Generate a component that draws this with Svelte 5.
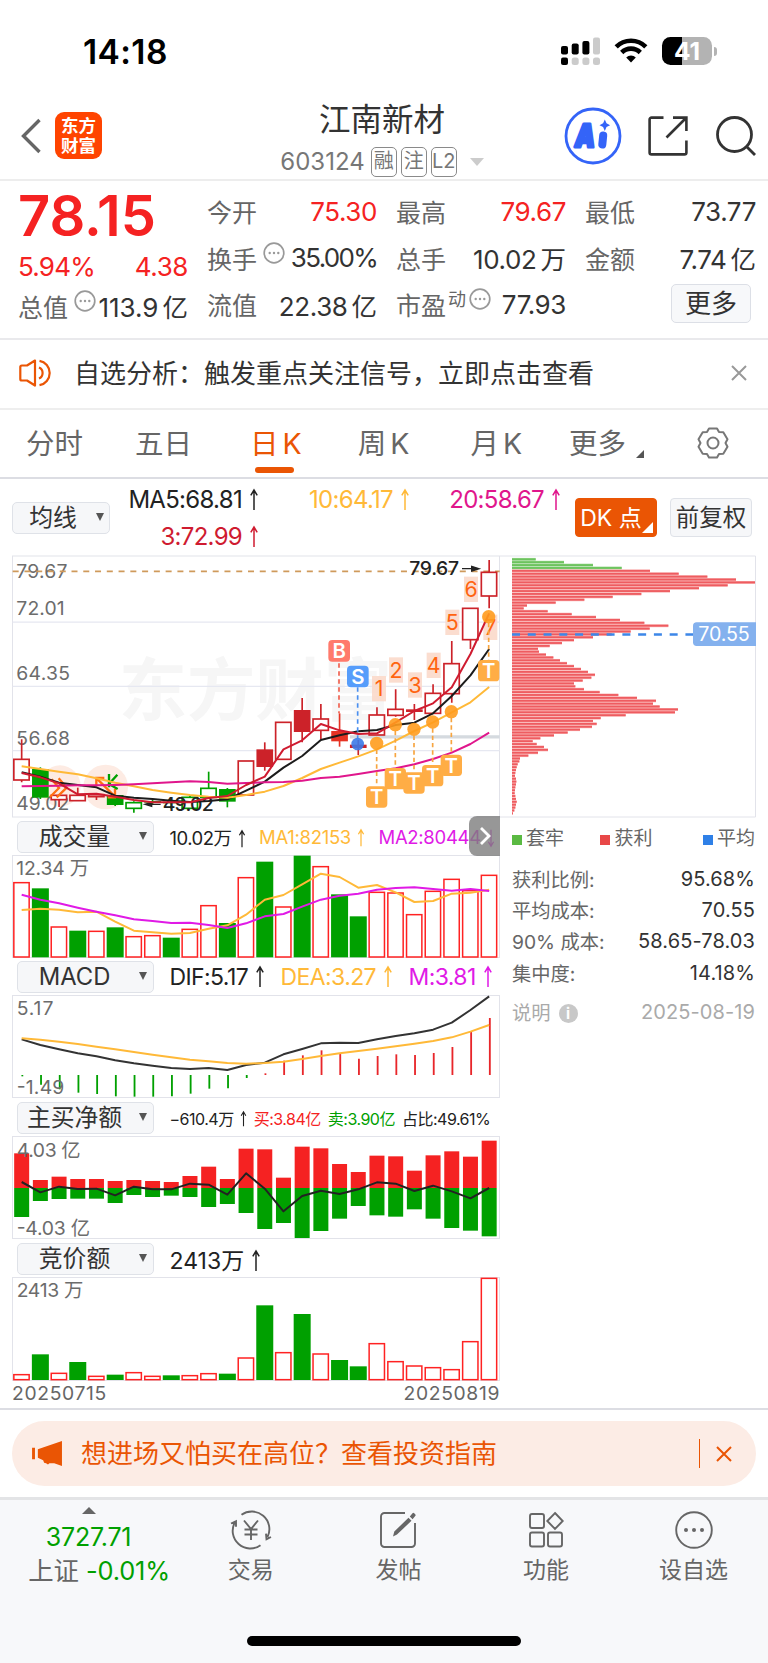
<script>
  // Chart geometry is kept at 3 units per css pixel
  const STEP = 56.1;
  const cx = (i) => 65 + STEP * i;
  const line = (ys) => ys.map((y, i) => `${cx(i).toFixed(1)},${y}`).join(' ');

  const quotes = [
    [
      { label: '今开', value: '75.30', red: true },
      { label: '换手', value: '35.00%', info: true, tight: true },
      { label: '流值', value: '22.38', unit: '亿' }
    ],
    [
      { label: '最高', value: '79.67', red: true },
      { label: '总手', value: '10.02', unit: '万' },
      { label: '市盈', sup: '动', value: '77.93', info: true }
    ],
    [
      { label: '最低', value: '73.77' },
      { label: '金额', value: '7.74', unit: '亿' }
    ]
  ];

  // h = hollow, f = filled; [type, colour, body top, body bottom, wick top, wick bottom]
  const RED = '#cc2229';
  const GREEN = '#00a000';
  const candles = [
    ['h', RED, 628, 690, 568, 697],
    ['f', GREEN, 657, 743, 652, 747],
    ['h', RED, 736, 749, 736, 771],
    ['h', RED, 736, 752, 713, 752],
    ['h', RED, 734, 740, 730, 750],
    ['f', GREEN, 735, 765, 733, 768],
    ['h', GREEN, 758, 775, 754, 788],
    ['f', GREEN, 753, 758, 749, 764],
    ['f', GREEN, 755, 760, 751, 776],
    ['h', GREEN, 742, 775, 738, 775],
    ['h', GREEN, 715, 742, 665, 742],
    ['f', GREEN, 717, 755, 714, 772],
    ['h', RED, 633, 735, 633, 735],
    ['f', RED, 598, 651, 577, 662],
    ['h', RED, 517, 628, 517, 628],
    ['f', RED, 480, 546, 444, 577],
    ['h', RED, 507, 541, 462, 568],
    ['f', '#e63323', 543, 574, 490, 590],
    ['f', RED, 584, 594, 570, 615],
    ['h', RED, 495, 555, 472, 555],
    ['h', RED, 478, 496, 418, 500],
    ['f', RED, 478, 486, 462, 510],
    ['h', RED, 430, 490, 403, 490],
    ['h', RED, 341, 431, 273, 458],
    ['h', RED, 175, 269, 175, 297],
    ['h', RED, 67, 138, 30, 175]
  ];
  const ma3 = [669, 682, 700, 733, 731, 740, 750, 757, 757, 757, 744, 738, 705, 680, 598, 571, 522, 541, 552, 550, 517, 483, 460, 412, 312, 190];
  const ma5 = [667, 680, 698, 705, 712, 737, 743, 747, 752, 756, 753, 748, 722, 695, 653, 618, 570, 556, 544, 540, 525, 518, 490, 438, 376, 297];
  const ma10 = [649, 657, 665, 673, 685, 698, 709, 720, 728, 735, 740, 743, 735, 725, 708, 684, 657, 638, 619, 598, 572, 543, 517, 487, 457, 411];
  const ma20 = [709, 708, 707, 706, 706, 705, 703, 700, 697, 694, 696, 701, 699, 697, 696, 692, 684, 680, 672, 663, 655, 643, 627, 608, 582, 548];

  const priceLabels = [
    ['79.67', 84, 153],
    ['72.01', 195, 145],
    ['64.35', 390, 161],
    ['56.68', 585, 161],
    ['49.02', 779, 159]
  ];
  const counts = [
    [1, 1137, 416],
    [2, 1188, 360],
    [3, 1245, 405],
    [4, 1301, 346],
    [5, 1357, 217],
    [6, 1413, 118],
    [7, 1471, 232]
  ];
  const tMarks = [
    [1130, 580, 741],
    [1186, 524, 686],
    [1242, 538, 699],
    [1298, 516, 677],
    [1354, 485, 646],
    [1466, 200, 362]
  ];

  const volume = [202, 220, 335, 347, 348, 337, 364, 361, 368, 342, 271, 324, 187, 140, 275, 122, 154, 238, 304, 231, 233, 298, 228, 192, 226, 180];
  const volumeDown = [1, 3, 5, 8, 11, 13, 15, 17, 18];
  const volMa1 = [285, 281, 284, 292, 290, 320, 347, 352, 356, 354, 341, 331, 299, 254, 240, 208, 176, 186, 218, 210, 232, 261, 258, 236, 233, 224];
  const volMa2 = [239, 254, 265, 278, 290, 301, 313, 318, 324, 323, 330, 339, 325, 304, 297, 275, 254, 242, 236, 224, 219, 217, 222, 227, 222, 228];

  const dif = [238, 255, 268, 280, 289, 301, 310, 317, 324, 327, 324, 330, 315, 308, 283, 267, 250, 248, 249, 238, 228, 220, 209, 188, 150, 109];
  const dea = [235, 239, 245, 252, 260, 268, 276, 284, 292, 299, 304, 309, 311, 309, 305, 297, 288, 280, 273, 266, 259, 251, 243, 232, 215, 195];
  const macd = [349, 374, 388, 398, 402, 409, 410, 410, 409, 401, 386, 385, 354, 340, 302, 286, 271, 281, 296, 288, 283, 285, 279, 261, 216, 174];

  const buyTop = [160, 240, 230, 237, 237, 243, 240, 243, 246, 228, 200, 237, 146, 148, 233, 140, 145, 192, 216, 167, 169, 212, 166, 154, 170, 122];
  const sellBottom = [351, 303, 297, 296, 296, 309, 285, 291, 287, 291, 321, 312, 339, 387, 369, 414, 393, 356, 318, 346, 350, 328, 356, 384, 392, 409];
  const netLine = [246, 277, 260, 267, 266, 286, 260, 268, 268, 251, 254, 284, 220, 266, 334, 288, 272, 282, 268, 247, 251, 273, 257, 274, 295, 264];

  const auction = [403, 343, 399, 366, 408, 404, 397, 408, 406, 406, 400, 401, 353, 196, 337, 222, 341, 360, 379, 310, 364, 377, 382, 388, 304, 114];
  const auctionDown = [1, 3, 5, 8, 11, 13, 15, 17, 18];

  const chips = [
    107, 192, 279, 365, 450, 536, 622, 708, 765, 683, 597, 510, 424, 338, 253, 167, 81, 71, 143, 215, 288, 360, 433, 505, 449,
    392, 335, 279, 222, 186, 149, 114, 117, 138, 160, 180, 201, 222, 243, 264, 285, 274, 248, 222, 226, 252, 299, 355, 411, 468,
    459, 479, 534, 525, 377, 302, 279, 290, 276, 240, 203, 162, 121, 98, 110, 132, 144, 114, 85, 60, 58, 53, 50, 48, 46,
    45, 48, 49, 48, 46, 45, 44, 46, 48, 50, 48, 46, 43, 39
  ];

  const costRows = [
    ['获利比例:', '95.68%'],
    ['平均成本:', '70.55'],
    ['90% 成本:', '58.65-78.03'],
    ['集中度:', '14.18%']
  ];
</script>

{#snippet arrow()}
  <svg class="arrow" viewBox="0 0 8 22"><path d="M4 21V1M.8 6.4 4 1l3.2 5.4" /></svg>
{/snippet}

{#snippet info()}
  <svg class="info" viewBox="0 0 22 22">
    <circle cx="11" cy="11" r="9.8" />
    <g><circle cx="6.7" cy="11" r="1.2" /><circle cx="11" cy="11" r="1.2" /><circle cx="15.3" cy="11" r="1.2" /></g>
  </svg>
{/snippet}

{#snippet bars(tops, down, base)}
  {#each tops as top, i}
    {#if down.includes(i)}
      <rect x={cx(i) - 25.5} y={top} width="51" height={base - top} fill={GREEN} />
    {:else}
      <rect x={cx(i) - 23.5} y={top + 1} width="46" height={Math.max(base - top - 2, 4)} fill="#fff" stroke="#f22" stroke-width="4.5" />
    {/if}
  {/each}
{/snippet}

{#snippet picker(name)}
  <button class="picker">{name}<i></i></button>
{/snippet}

<div class="page">
  <header class="status">
    <span class="time">14:18</span>
    <div class="status-icons">
      <svg class="signal" viewBox="0 0 40 28">
        <g fill="#000">
          <rect x="0" y="9" width="7" height="8.5" rx="2" /><rect x="10.7" y="6.5" width="7" height="11" rx="2" />
          <rect x="21.4" y="4" width="7" height="13.5" rx="2" /><rect x="0" y="20.5" width="7" height="7.5" rx="2" />
        </g>
        <g fill="#cbcbcb">
          <rect x="32" y="0.5" width="7" height="17" rx="2" /><rect x="10.7" y="20.5" width="7" height="7.5" rx="2.5" />
          <rect x="21.4" y="20.5" width="7" height="7.5" rx="2.5" /><rect x="32" y="20.5" width="7" height="7.5" rx="2.5" />
        </g>
      </svg>
      <svg class="wifi" viewBox="0 0 34 25">
        <path d="M2.2 8.8a21 21 0 0 1 29.6 0M7.7 14.5a13.2 13.2 0 0 1 18.6 0" />
        <path class="dot" d="M17 24.6l-4.8-5a6.8 6.8 0 0 1 9.6 0z" />
      </svg>
      <div class="battery"><b>41</b></div>
    </div>
  </header>

  <nav class="title-bar">
    <svg class="back" viewBox="0 0 20 36"><path d="M18.5 2 2.5 18l16 16" /></svg>
    <div class="logo"><span>东方</span><span>财富</span></div>
    <div class="title">
      <h1>江南新材</h1>
      <div class="code">
        <span class="num">603124</span><em>融</em><em>注</em><em>L2</em><i></i>
      </div>
    </div>
    <svg class="ai" viewBox="0 0 58 58">
      <circle cx="29" cy="29" r="27" />
      <text x="11" y="39.5" textLength="20" lengthAdjust="spacingAndGlyphs">A</text>
      <path class="stem" d="M39.2 28.5 38.3 37.5" />
      <path class="star" d="M40.8 12.5l1.7 3.8 3.6 1.9-3.6 1.9-1.7 3.8-1.7-3.8-3.6-1.9 3.6-1.9z" />
    </svg>
    <svg class="share" viewBox="0 0 40 40"><path d="M15.5 1.6H3.6a2 2 0 0 0-2 2v32.8a2 2 0 0 0 2 2h32.8a2 2 0 0 0 2-2V24.5M25 1.6h13.4V15M38 2 18.5 21.5" /></svg>
    <svg class="search" viewBox="0 0 40 40"><circle cx="18.5" cy="18.5" r="17" /><path d="M30.5 30.5l8.5 8.5" /></svg>
  </nav>

  <section class="quote">
    <div class="col main">
      <strong>78.15</strong>
      <div class="cell change red"><span class="pct">5.94%</span><span>4.38</span></div>
      <div class="cell">
        <label>总值</label>{@render info()}<span class="val cap">113.9<small>亿</small></span>
      </div>
    </div>
    {#each quotes as col, c}
      <div class="col">
        {#each col as q}
          <div class="cell">
            <label>{q.label}{#if q.sup}<sup>{q.sup}</sup>{/if}</label>
            {#if q.info}{@render info()}{/if}
            <span class="val" class:red={q.red} class:tight={q.tight}>{q.value}{#if q.unit}<small>{q.unit}</small>{/if}</span>
          </div>
        {/each}
        {#if c === 2}<div class="cell end"><button class="more">更多</button></div>{/if}
      </div>
    {/each}
  </section>

  <section class="notice">
    <svg class="horn" viewBox="0 0 34 28">
      <path d="M16 1.5 8 6.5H2.8a1.5 1.5 0 0 0-1.5 1.5v12a1.5 1.5 0 0 0 1.5 1.5H8l8 5zM20 8.5a6 6 0 0 1 0 11M20.5 1.8a12.4 12.4 0 0 1 0 24.4" />
    </svg>
    <p>自选分析：触发重点关注信号，立即点击查看</p>
    <svg class="close" viewBox="0 0 16 16"><path d="M1 1l14 14M15 1 1 15" /></svg>
  </section>

  <nav class="tabs">
    <span>分时</span><span>五日</span><span class="on">日<b>K</b></span><span>周<b>K</b></span><span>月<b>K</b></span><span class="drop">更多<i></i></span>
    <svg class="gear" viewBox="0 0 32 32">
      <path d="M12 1.5h8l2 3.6 4.3.2 4.2 7-2 3.7 2 3.7-4.2 7-4.3.2-2 3.6h-8l-2-3.6-4.3-.2-4.2-7 2-3.7-2-3.7 4.2-7 4.3-.2z" />
      <circle cx="16" cy="16" r="5.5" />
    </svg>
  </nav>

  <section class="ma-bar">
    <button class="picker small">均线<i></i></button>
    <div class="ma">
      <span class="black">MA5:68.81{@render arrow()}</span>
      <span class="gold">10:64.17{@render arrow()}</span>
      <span class="pink">20:58.67{@render arrow()}</span>
      <span class="crimson">3:72.99{@render arrow()}</span>
    </div>
    <button class="dk">DK 点<i></i></button>
    <button class="adjust">前复权</button>
  </section>

  <div class="charts">
    <div class="left">
      <svg class="chart kline" viewBox="36 15 1464 786">
        <rect class="frame" x="37.5" y="18" width="1461" height="783" />
        <text class="watermark" x="356" y="496" textLength="820">东方财富</text>
        <path class="grid" d="M38 216.5H1499M38 409H1499M38 602H1499" />
        <path d="M1050 560.5H1499" stroke="#d5dadf" stroke-width="10" />
        <circle cx="180" cy="708" r="62" fill="#fdebe3" />
        <circle cx="317" cy="711" r="67" fill="#fdebe3" />
        {#each priceLabels as [text, y, w]}
          <text class="axis" x="49" {y} textLength={w}>{text}</text>
        {/each}
        <path d="M38 64H1499" stroke="#cf9a5b" stroke-width="5.5" stroke-dasharray="18 17.3" />
        {#each candles as [type, color, top, bottom, high, low], i}
          {#if type === 'h'}
            <path d="M{cx(i)} {high}V{top}M{cx(i)} {bottom}V{low}" stroke={color} stroke-width="5" />
            <rect x={cx(i) - 23.5} y={top} width="46" height={bottom - top} fill="#fff" stroke={color} stroke-width="5" />
          {:else}
            <path d="M{cx(i)} {high}V{low}" stroke={color} stroke-width="5" />
            <rect x={cx(i) - 25} y={top} width="50" height={bottom - top} fill={color} />
          {/if}
        {/each}
        {#each counts as [n, x, y]}
          <rect x={x - 21} y={y - 38} width="42" height="76" fill="#fbd9ca" opacity="0.9" />
          <text class="count" {x} y={y + 23}>{n}</text>
        {/each}
        <g class="signal-mark">
          <path d="M155 688l22 26-27 27M176 685l24 28-30 29" />
          <path d="M289 709V684H313M290 685l55 55M345 716v26h-22" />
          <path d="M327 672V712M352 674l-25 28 26 15" stroke="#00a000" />
        </g>
        <text class="extreme" x="488" y="783" textLength="153">49.02</text>
        <path class="pointer" d="M440 763H482M455 757l-20 6 20 6z" />
        <polyline points={line(ma5)} stroke="#1c1c1c" />
        <polyline points={line(ma10)} stroke="#ffb938" />
        <polyline points={line(ma20)} stroke="#e0168c" />
        <polyline points={line(ma3)} stroke="#cf1b30" />
        <path d="M1017 340V490" stroke="#f0604f" stroke-width="5" stroke-dasharray="13 11" />
        <path d="M1073 412V565" stroke="#4a8ff0" stroke-width="5" stroke-dasharray="13 11" />
        <rect x="985" y="270" width="65" height="65" rx="12" fill="#ff7a6c" />
        <text class="mark" x="1017.5" y="324">B</text>
        <rect x="1041" y="347" width="65" height="65" rx="12" fill="#569dfb" />
        <text class="mark" x="1073.5" y="401">S</text>
        <circle cx="1073" cy="582" r="19" fill="#3c7ae8" opacity="0.9" />
        {#each tMarks as [x, dot, box]}
          <path d="M{x} {dot + 19}V{box - 32}" stroke="#f7a540" stroke-width="5" stroke-dasharray="13 9" />
          <circle cx={x} cy={dot} r="20" fill="#ff9c1e" opacity="0.9" />
          <rect x={x - 32} y={box - 32} width="64" height="64" rx="11" fill="#ffad45" />
          <text class="mark" {x} y={box + 22}>T</text>
        {/each}
        <text class="extreme" x="1228" y="76" textLength="149">79.67</text>
        <path class="pointer" d="M1386 56H1430M1415 49l22 7-22 7z" />
      </svg>

      <div class="row vol">
        {@render picker('成交量')}
        <span class="black">10.02万{@render arrow()}</span>
        <span class="gold">MA1:82153{@render arrow()}</span>
        <span class="purple down">MA2:80444{@render arrow()}</span>
        <button class="fold" aria-label="收起"><svg viewBox="0 0 12 20"><path d="M2 2l8 8-8 8" /></svg></button>
      </div>
      <svg class="chart" viewBox="36 120 1464 309">
        <rect class="frame" x="37.5" y="121.5" width="1461" height="306" />
        <text class="axis" x="49" y="181" textLength="218">12.34 万</text>
        {@render bars(volume, volumeDown, 427)}
        <polyline points={line(volMa1)} stroke="#ffb938" />
        <polyline points={line(volMa2)} stroke="#e01ae6" />
      </svg>

      <div class="row macd">
        {@render picker('MACD')}
        <span class="black">DIF:5.17{@render arrow()}</span>
        <span class="gold">DEA:3.27{@render arrow()}</span>
        <span class="purple">M:3.81{@render arrow()}</span>
      </div>
      <svg class="chart" viewBox="36 105 1464 309">
        <rect class="frame" x="37.5" y="106.5" width="1461" height="306" />
        {#each macd as y, i}
          <path d="M{cx(i) + 2} 345V{y}" stroke={y > 345 ? GREEN : '#e8262a'} stroke-width="5.5" />
        {/each}
        <text class="axis" x="50" y="166" textLength="110">5.17</text>
        <text class="axis" x="50" y="401" textLength="143">-1.49</text>
        <polyline points={line(dif)} stroke="#333" />
        <polyline points={line(dea)} stroke="#ffb938" />
      </svg>

      <div class="row net">
        {@render picker('主买净额')}
        <span class="black">−610.4万{@render arrow()}</span>
        <span class="red">买:3.84亿</span>
        <span class="green">卖:3.90亿</span>
        <span class="black">占比:49.61%</span>
      </div>
      <svg class="chart" viewBox="36 108 1464 309">
        <rect class="frame" x="37.5" y="109.5" width="1461" height="306" />
        {#each buyTop as y, i}
          <rect x={cx(i) - 22.5} {y} width="45" height={264 - y} fill="#f52222" />
          <rect x={cx(i) - 22.5} y="264" width="45" height={sellBottom[i] - 264} fill={GREEN} />
        {/each}
        <text class="axis" x="50" y="170" textLength="192">4.03 亿</text>
        <text class="axis" x="50" y="404" textLength="220">-4.03 亿</text>
        <polyline points={line(netLine)} stroke="#222" />
      </svg>

      <div class="row bid">
        {@render picker('竞价额')}
        <span class="black">2413万{@render arrow()}</span>
      </div>
      <svg class="chart bid-chart" viewBox="36 111 1464 312">
        <rect class="frame" x="37.5" y="112.5" width="1461" height="309" />
        <text class="axis" x="50" y="171" textLength="200">2413 万</text>
        {@render bars(auction, auctionDown, 420)}
      </svg>
      <div class="dates"><span>20250715</span><span>20250819</span></div>
    </div>

    <div class="right">
      <svg class="chart chips" viewBox="0 15 768 786">
        <path class="frame" d="M0 18H766.5V801H0" />
        {#each chips as x, i}
          <rect x="36" y={23.7 + i * 8.66} width={x - 36} height="8.66" fill={i < 4 ? '#a5d99b' : '#f9abab'} />
          <rect x="36" y={25.2 + i * 8.66} width={x - 36} height="5.4" fill={i < 4 ? '#6cc35d' : '#ee5c60'} />
        {/each}
        <path d="M36 253.5H580" stroke="#3d87e8" stroke-width="7" stroke-dasharray="24 23.3" />
        <path d="M768 217H590q-11 0-11 11v49q0 11 11 11H768z" fill="#84b1ee" />
        <text class="badge" x="595" y="274" textLength="154">70.55</text>
      </svg>
      <div class="legend">
        <span><i class="g"></i>套牢</span><span><i class="r"></i>获利</span><span><i class="b"></i>平均</span>
      </div>
      {#each costRows as [name, value]}
        <div class="cost"><span>{name}</span><b>{value}</b></div>
      {/each}
      <div class="cost note"><span>说明<i>i</i></span><b>2025-08-19</b></div>
    </div>
  </div>

  <section class="promo">
    <div class="pill">
      <svg class="mega" viewBox="0 0 32 28"><path d="M0 8h3v12H0zM6 9.5 31 1v26l-8-2.8h-1.5L20.5 24l-1.5 0-1 0-1.5 1.5-2-1.5-2-.5-1-2.5L6 18.5z" /></svg>
      <p>想进场又怕买在高位？查看投资指南</p>
      <i></i>
      <svg class="close" viewBox="0 0 16 16"><path d="M1 1l14 14M15 1 1 15" /></svg>
    </div>
  </section>

  <footer>
    <div class="index">
      <i></i>
      <span class="green">3727.71</span>
      <div>上证 <span class="green">-0.01%</span></div>
    </div>
    <div class="item">
      <svg viewBox="0 0 42 38">
        <path d="M11.5 3.8A17.6 17.6 0 0 1 37.5 26M30.5 34.2A17.6 17.6 0 0 1 4.8 11.5M1 12.5l5-2.2v5.5M41 26l-4.5 2.2-.5-5.5M14 9.5l7 8.5 7-8.5M14.5 18.5h13M14.5 23.5h13M21 18v11" />
      </svg>
      交易
    </div>
    <div class="item">
      <svg viewBox="0 0 38 38">
        <path d="M26 2H5.5A3.5 3.5 0 0 0 2 5.5v27A3.5 3.5 0 0 0 5.5 36h27a3.5 3.5 0 0 0 3.5-3.5V12" />
        <path class="solid" d="M14 25.5l1.3-5L29.5 6.8l3 3L18 23.5zM30.8 5.5l2.7-3.2a1.2 1.2 0 0 1 1.7 0l1 1a1.2 1.2 0 0 1 0 1.7L33.6 8.2z" />
      </svg>
      发帖
    </div>
    <div class="item">
      <svg viewBox="0 0 38 38">
        <rect x="3" y="3" width="14" height="14" rx="2" /><rect x="3" y="21.5" width="14" height="14" rx="2" />
        <rect x="21" y="21.5" width="14" height="14" rx="2" /><path d="M28 2l7.7 8-7.7 8-7.7-8z" />
      </svg>
      功能
    </div>
    <div class="item">
      <svg viewBox="0 0 38 38">
        <circle cx="19" cy="19" r="17.8" />
        <g class="solid"><circle cx="11" cy="19" r="2" /><circle cx="19" cy="19" r="2" /><circle cx="27" cy="19" r="2" /></g>
      </svg>
      设自选
    </div>
    <div class="home"></div>
  </footer>
</div>

<style>
  :global(body) {
    margin: 0;
    background: #fff;
  }

  .page {
    width: 768px;
    height: 1663px;
    overflow: hidden;
    display: flex;
    flex-direction: column;
    font-family: Inter, 'Noto Sans CJK SC', sans-serif;
    color: #333;
    background: #fff;
    white-space: nowrap;
  }

  h1,
  p {
    margin: 0;
    font-weight: 400;
  }

  button {
    font: inherit;
    color: #333;
    padding: 0;
    box-sizing: border-box;
  }

  svg {
    display: block;
    flex: none;
    fill: none;
    overflow: visible;
  }

  i {
    font-style: normal;
  }

  .red { color: #f52222; }
  .green { color: #00a000; }
  .black { color: #222; }
  .gold { color: #ffb938; }
  .pink { color: #e0168c; }
  .crimson { color: #cf1b30; }
  .purple { color: #e01ae6; }

  .status {
    height: 90px;
    display: flex;
    justify-content: space-between;
    box-sizing: border-box;
    padding: 0 52px 0 83px;
  }

  .time {
    margin-top: 32px;
    font-size: 33.5px;
    line-height: 40px;
    font-weight: 600;
    color: #000;
    letter-spacing: 0.4px;
  }

  .status-icons {
    display: flex;
    align-items: flex-start;
    margin-top: 37px;
  }

  .signal {
    width: 40px;
    height: 28px;
    margin-right: 13px;
  }

  .wifi {
    width: 34px;
    height: 25px;
    margin: 1px 14px 0 0;
    stroke: #000;
    stroke-width: 4.6;
  }

  .wifi .dot {
    fill: #000;
    stroke: none;
  }

  .battery {
    position: relative;
    width: 50px;
    height: 28px;
    margin-right: 4px;
    border-radius: 8.5px;
    background: linear-gradient(90deg, #000 41%, #b3b3b3 41%);
    text-align: center;
  }

  .battery b {
    font-size: 24.5px;
    line-height: 28px;
    font-weight: 700;
    color: #fff;
  }

  .battery::after {
    content: '';
    position: absolute;
    right: -4.5px;
    top: 10px;
    width: 3px;
    height: 9px;
    border-radius: 0 4px 4px 0;
    background: #b3b3b3;
  }

  .title-bar {
    height: 91px;
    display: flex;
    align-items: flex-start;
    box-sizing: border-box;
    padding: 0 12px 0 21px;
    border-bottom: 2px solid #ededed;
  }

  .back {
    width: 20px;
    height: 36px;
    margin: 28px 14px 0 0;
    stroke: #666;
    stroke-width: 3.4;
  }

  .logo {
    width: 47px;
    height: 47px;
    margin-top: 22px;
    border-radius: 9px;
    background: #ff4400;
    color: #fff;
    display: flex;
    flex-direction: column;
    align-items: center;
    justify-content: center;
    font-size: 17.5px;
    line-height: 19.5px;
    font-weight: 700;
  }

  .title {
    flex: 1;
    display: flex;
    flex-direction: column;
    align-items: center;
    margin-left: 147px;
    margin-right: 49px;
  }

  h1 {
    margin-top: 10px;
    font-size: 31.5px;
    line-height: 40px;
  }

  .code {
    display: flex;
    align-items: center;
    margin-top: 6px;
    height: 32px;
    color: #777;
    font-size: 24px;
    line-height: 30px;
  }

  .code .num {
    margin-right: 6px;
  }

  .code em {
    box-sizing: border-box;
    width: 26px;
    height: 30px;
    margin-right: 4px;
    border: 1.5px solid #8a8a8a;
    border-radius: 5px;
    font-style: normal;
    font-size: 20px;
    line-height: 26px;
    text-align: center;
  }

  .code i {
    margin-left: 9px;
    border: 7px solid transparent;
    border-top: 8px solid #ccc;
    border-bottom: 0;
  }

  .ai {
    width: 58px;
    height: 58px;
    margin: 17px 26px 0 0;
    stroke: #3464f8;
    stroke-width: 2.8;
  }

  .ai text {
    fill: #3464f8;
    stroke-width: 3;
    stroke-linejoin: round;
    font-size: 32px;
    font-weight: 900;
    font-style: italic;
  }

  .ai .stem {
    stroke-width: 8;
    stroke-linecap: round;
  }

  .ai .star {
    fill: #3464f8;
    stroke: none;
  }

  .share {
    width: 40px;
    height: 40px;
    margin: 26px 28px 0 0;
    stroke: #333;
    stroke-width: 2.6;
  }

  .search {
    width: 40px;
    height: 40px;
    margin-top: 26px;
    stroke: #333;
    stroke-width: 2.8;
  }

  .quote {
    height: 159px;
    box-sizing: border-box;
    display: grid;
    grid-template-columns: repeat(4, 169px);
    column-gap: 20px;
    padding: 7px 13px 0 19px;
    border-bottom: 2px solid #e9e9ec;
  }

  .col {
    display: flex;
    flex-direction: column;
    margin-left: -1px;
  }

  .cell {
    height: 46.5px;
    display: flex;
    align-items: center;
    font-size: 26px;
    letter-spacing: -0.4px;
  }

  .col:last-child {
    margin-right: -1px;
  }

  .col.main strong {
    height: 54px;
    font-size: 56px;
    line-height: 56px;
    font-weight: 600;
    color: #f52222;
  }

  .col.main .cell {
    height: 31px;
  }

  .col.main .cell.change {
    height: 48px;
    justify-content: space-between;
  }

  .cell .pct {
    letter-spacing: -0.8px;
  }

  .cell label {
    color: #666;
    font-size: 25px;
    letter-spacing: 0;
  }

  .cell sup {
    font-size: 18px;
    line-height: 1;
    vertical-align: 9px;
    margin-left: 2px;
  }

  .cell .val {
    margin-left: auto;
  }

  .cell .tight {
    letter-spacing: -1.7px;
  }

  .cell .cap {
    letter-spacing: 0;
  }

  .cell small {
    font-size: 25.5px;
    margin-left: 4px;
    letter-spacing: 0;
  }

  .cell .info {
    width: 22px;
    height: 22px;
    margin: -10px -6px 0 6px;
    stroke: #999;
    stroke-width: 1.7;
  }

  .cell label:has(sup) + .info {
    margin-left: 3px;
  }

  .info g {
    fill: #999;
    stroke: none;
  }

  .cell.end {
    justify-content: flex-end;
    padding-right: 5px;
  }

  .more {
    width: 80px;
    height: 39px;
    margin-top: -1px;
    border: 1.5px solid #dcdfe6;
    border-radius: 5px;
    background: #f7f8fa;
    line-height: 34px;
    letter-spacing: 0;
  }

  .notice {
    height: 70px;
    box-sizing: border-box;
    display: flex;
    align-items: center;
    padding: 0 21px 2px 19px;
    border-bottom: 2px solid #eee;
  }

  .horn {
    width: 34px;
    height: 28px;
    margin-right: 21px;
    stroke: #ea5504;
    stroke-width: 2.2;
    stroke-linejoin: round;
  }

  .notice p {
    font-size: 26px;
    padding-bottom: 4px;
  }

  .close {
    width: 16px;
    height: 16px;
    margin-left: auto;
    stroke: #999;
    stroke-width: 2;
  }

  .tabs {
    height: 69px;
    box-sizing: border-box;
    display: flex;
    padding: 0 39px 0 26px;
    border-bottom: 2px solid #dcdde3;
    font-size: 28.5px;
    line-height: 67px;
    color: #666;
  }

  .tabs span {
    position: relative;
    flex: none;
    margin-right: 53px;
  }

  .tabs span:nth-child(2) { margin-left: -1px; }
  .tabs span:nth-child(3) { margin-left: 5px; }
  .tabs span:nth-child(4) { margin-left: 3px; }
  .tabs span:nth-child(5) { margin-left: 8px; }
  .tabs span:nth-child(6) { margin-left: -6px; }

  .tabs b {
    font-weight: 400;
    margin-left: 4px;
  }

  .tabs .on {
    color: #ea5504;
  }

  .tabs .on::after {
    content: '';
    position: absolute;
    left: 5px;
    bottom: 4px;
    width: 39px;
    height: 6px;
    border-radius: 3px;
    background: #ea5504;
  }

  .drop i {
    position: absolute;
    left: 67px;
    top: 40px;
    border-left: 8px solid transparent;
    border-bottom: 8px solid #555;
  }

  .gear {
    width: 32px;
    height: 32px;
    margin: 17px 0 0 auto;
    stroke: #777;
    stroke-width: 2;
    stroke-linejoin: round;
  }

  .ma-bar {
    height: 76px;
    display: flex;
    padding: 0 16px 0 12px;
    font-size: 24px;
  }

  .picker {
    flex: none;
    position: relative;
    width: 137px;
    height: 32px;
    padding-right: 21px;
    border: 1.5px solid #dfe2e8;
    border-radius: 5px;
    background: #f6f7f9;
    font-size: 23.8px;
    line-height: 28px;
    letter-spacing: 0;
  }

  .picker i {
    position: absolute;
    right: 5.5px;
    top: 10px;
    border: 4.5px solid transparent;
    border-top: 8px solid #555;
    border-bottom: 0;
  }

  .picker.small {
    width: 98px;
    margin-top: 23px;
    padding-right: 16px;
  }

  .arrow {
    display: inline-block;
    width: 10px;
    height: 22px;
    margin-left: 7px;
    vertical-align: -3px;
    stroke: currentColor;
    stroke-width: 1.5;
  }

  .ma {
    flex: 1;
    display: grid;
    grid-template-columns: 129px 151px 151px;
    grid-template-rows: 37px 37px;
    margin-left: 20px;
    padding-top: 2px;
    letter-spacing: -0.7px;
    line-height: 37px;
    justify-items: end;
  }

  .dk,
  .adjust {
    flex: none;
    position: relative;
    width: 82px;
    height: 39px;
    margin: 19px 0 0 13px;
    border: 1.5px solid #dfe2e8;
    border-radius: 4px;
    background: #f6f7f9;
    font-size: 23.5px;
    line-height: 34px;
  }

  .dk {
    margin-left: 0;
    padding-right: 10px;
    border-color: #ea5504;
    background: #ea5504;
    color: #fff;
    font-size: 23px;
  }

  .dk i {
    position: absolute;
    right: 3px;
    bottom: 3px;
    border-left: 11px solid transparent;
    border-bottom: 11px solid #fff;
  }

  .charts {
    display: flex;
    height: 853px;
    padding-left: 12px;
    border-bottom: 2px solid #dcdde3;
  }

  .left {
    width: 488px;
  }

  .chart {
    width: 488px;
    height: 103px;
  }

  .chart.kline {
    height: 262px;
  }

  .chart.bid-chart {
    height: 104px;
  }

  .chart.chips {
    width: 256px;
    height: 262px;
  }

  .frame {
    stroke: #e2e3ea;
    stroke-width: 3;
  }

  .grid {
    stroke: #e6e8f1;
    stroke-width: 3.5;
  }

  polyline {
    stroke-width: 6;
    stroke-linejoin: round;
  }

  .axis {
    font-size: 58px;
    fill: #6c6c6c;
  }

  .watermark {
    font-size: 205px;
    font-weight: 700;
    fill: #f6f6f6;
  }

  .count {
    font-size: 64px;
    fill: #ff6410;
    text-anchor: middle;
  }

  .mark {
    font-size: 61px;
    font-weight: 600;
    fill: #fff;
    text-anchor: middle;
  }

  .extreme {
    font-size: 58px;
    font-weight: 500;
    fill: #222;
  }

  .pointer {
    stroke: #222;
    fill: #222;
    stroke-width: 4;
  }

  .badge {
    font-size: 59px;
    fill: #fff;
  }

  .signal-mark {
    stroke: #ff7014;
    stroke-width: 7;
  }

  .row {
    position: relative;
    height: 38px;
    box-sizing: border-box;
    display: flex;
    align-items: center;
    padding: 1px 0 0 4.5px;
    font-size: 18.5px;
  }

  .row .picker + span {
    margin-left: 16px;
  }

  .row span + span {
    margin-left: 13px;
  }

  .vol span {
    letter-spacing: -0.3px;
  }

  .vol .black {
    letter-spacing: -0.5px;
  }

  .vol .arrow {
    width: 8px;
    height: 18px;
    margin-left: 6.5px;
  }

  .down .arrow {
    transform: rotate(180deg);
  }

  .row.macd {
    height: 37px;
    font-size: 23px;
    letter-spacing: -0.6px;
  }

  .macd span + span {
    margin-left: 15.5px;
  }

  .row.net {
    font-size: 16px;
    letter-spacing: -0.5px;
  }

  .row.net span + span {
    margin-left: 7px;
  }

  .net .arrow {
    width: 7px;
    height: 16px;
    margin-left: 6px;
    vertical-align: -2px;
  }

  .row.bid {
    font-size: 23px;
  }

  .fold {
    position: absolute;
    right: 0;
    top: -1px;
    width: 31px;
    height: 40px;
    border: 0;
    border-radius: 8px 0 0 8px;
    background: rgba(125, 125, 125, 0.8);
    display: flex;
    align-items: center;
    justify-content: center;
  }

  .fold svg {
    width: 12px;
    height: 20px;
    stroke: #fff;
    stroke-width: 2.8;
  }

  .dates {
    display: flex;
    justify-content: space-between;
    font-size: 19.3px;
    line-height: 25px;
    letter-spacing: 0.65px;
    color: #666;
  }

  .right {
    width: 256px;
  }

  .legend {
    height: 46px;
    box-sizing: border-box;
    display: flex;
    justify-content: space-between;
    padding: 0 1px 7px 12px;
    align-items: center;
    font-size: 19px;
    color: #666;
  }

  .legend span:nth-child(2) {
    margin-right: 14px;
  }

  .legend i {
    display: inline-block;
    width: 10px;
    height: 10px;
    margin-right: 4px;
  }

  .legend .g { background: #5bba42; }
  .legend .r { background: #e84848; }
  .legend .b { background: #2f80e7; }

  .cost {
    height: 31.4px;
    display: flex;
    align-items: center;
    justify-content: space-between;
    padding: 0 1px 0 12px;
    font-size: 19.3px;
    color: #666;
  }

  .cost b {
    font-weight: 400;
    color: #333;
    font-size: 20px;
    letter-spacing: 0.1px;
  }

  .cost.note {
    height: 47px;
    color: #aaa;
  }

  .cost.note b {
    color: #aaa;
  }

  .note i {
    display: inline-block;
    width: 19px;
    height: 19px;
    margin-left: 8px;
    border-radius: 50%;
    background: #c8c8c8;
    color: #fff;
    font-size: 15px;
    font-weight: 700;
    line-height: 19px;
    text-align: center;
    vertical-align: 1px;
  }

  .promo {
    height: 87px;
    box-sizing: border-box;
    padding: 11px 12px 0;
  }

  .pill {
    height: 65px;
    display: flex;
    align-items: center;
    border-radius: 32.5px;
    background: #fcece5;
    color: #ea5504;
    padding: 0 24px 0 20px;
  }

  .pill p {
    font-size: 26px;
    padding-bottom: 4px;
  }

  .mega {
    width: 31px;
    height: 27px;
    margin-right: 18px;
    fill: #ea5504;
  }

  .pill i {
    width: 1.5px;
    height: 29px;
    margin-left: auto;
    margin-right: 16px;
    background: #ea5504;
  }

  .pill .close {
    margin-left: 0;
    stroke: #ea5504;
  }

  footer {
    position: relative;
    flex: 1;
    display: flex;
    align-items: flex-start;
    border-top: 3px solid #e3e4e6;
    background: #f7f8fa;
    color: #666;
  }

  .index {
    width: 177px;
    display: flex;
    flex-direction: column;
    align-items: center;
    font-size: 25px;
  }

  .index i {
    margin: 7px 0;
    border: 7px solid transparent;
    border-bottom: 7px solid #666;
    border-top: 0;
  }

  .index span {
    letter-spacing: -0.2px;
    line-height: 33px;
  }

  .index div {
    margin-left: 21px;
    font-size: 25.4px;
    line-height: 34px;
  }

  .item {
    width: 147.6px;
    display: flex;
    flex-direction: column;
    align-items: center;
    font-size: 23px;
    line-height: 30px;
  }

  .item svg {
    height: 38px;
    margin: 11px 0 6px;
    stroke: #666;
    stroke-width: 1.9;
  }

  .item .solid {
    fill: #666;
    stroke: none;
  }

  .home {
    position: absolute;
    left: 247px;
    bottom: 17px;
    width: 274px;
    height: 10px;
    border-radius: 5px;
    background: #000;
  }
</style>
